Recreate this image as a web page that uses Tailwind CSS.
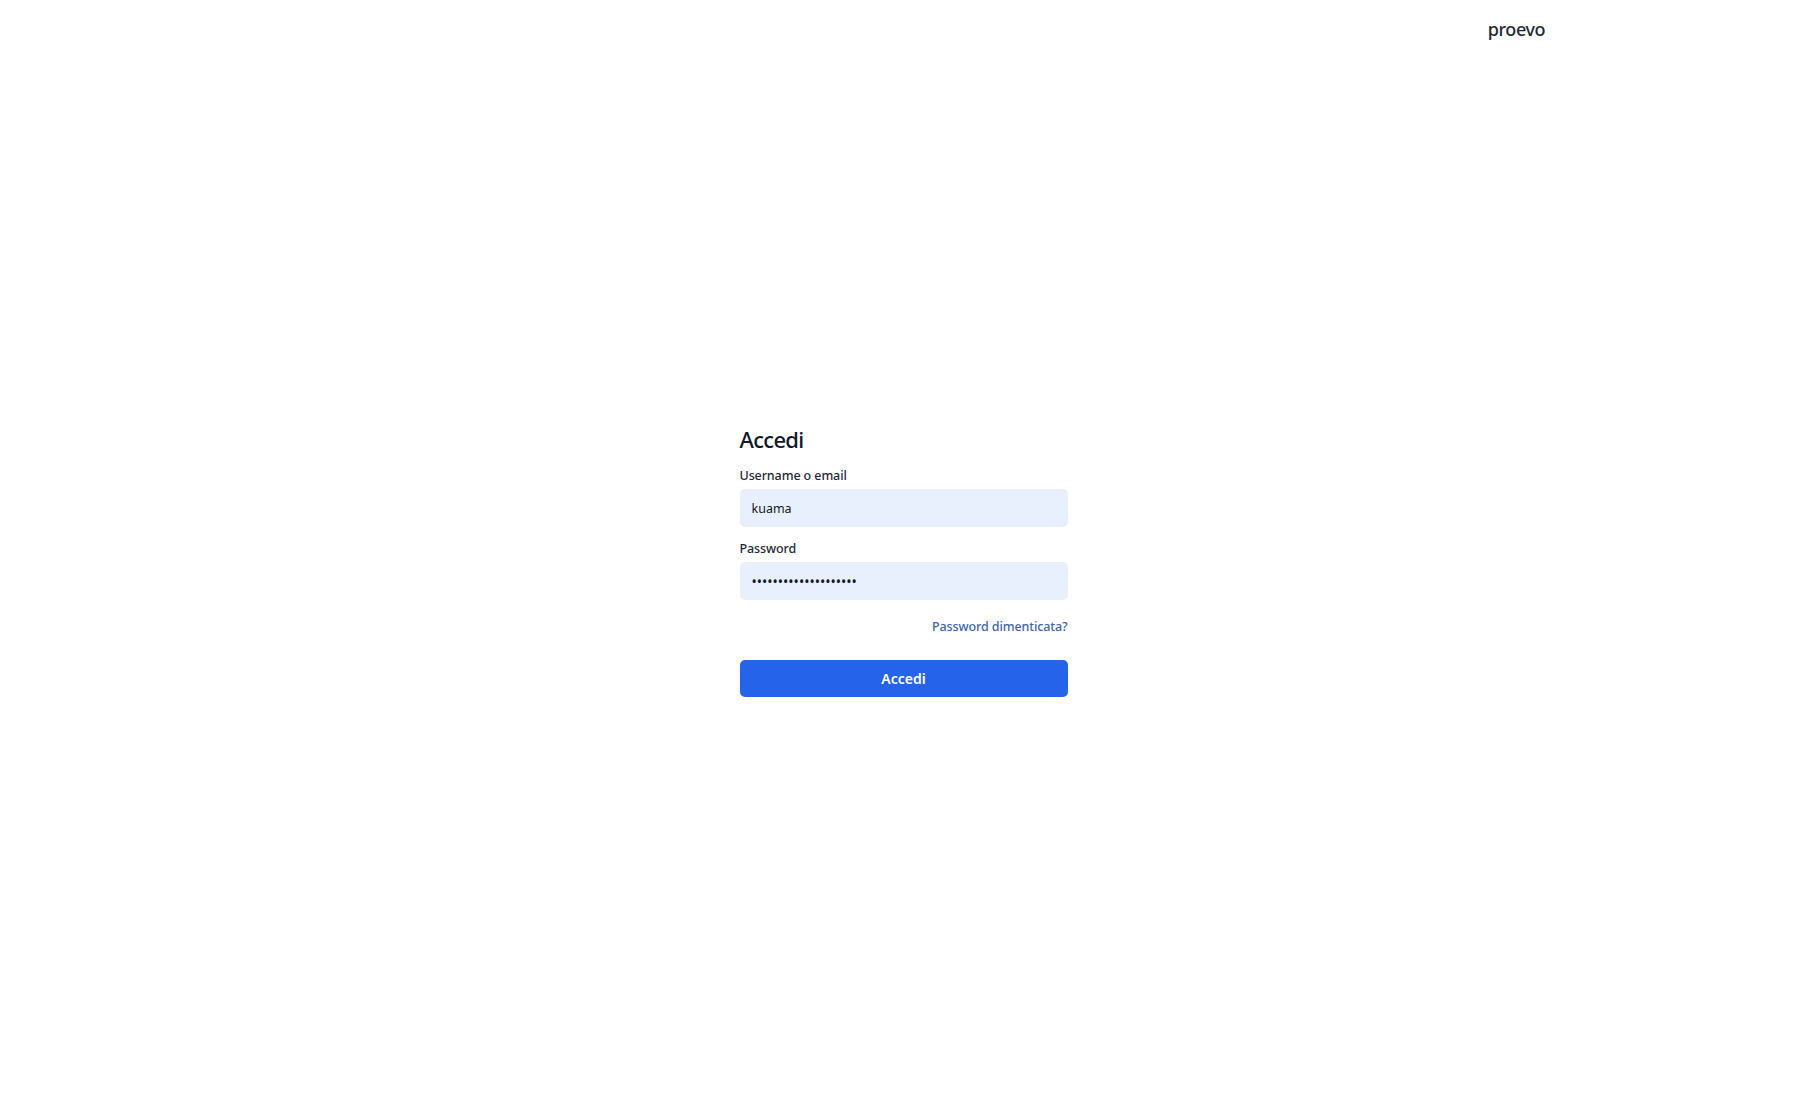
<!DOCTYPE html>
<html lang="it">
<head>
    <meta charset="UTF-8">
    <meta name="viewport" content="width=device-width, initial-scale=1.0">
    <title>Accedi - proevo</title>
    <script src="https://cdn.jsdelivr.net/npm/@tailwindcss/browser@4"></script>
</head>
<body class="bg-white font-['Noto_Sans','Open_Sans',sans-serif] text-[#111827]">
    <div class="min-h-screen flex flex-col">
        <header class="h-[60px] shrink-0 max-w-[1283px] w-full mx-auto flex justify-end pt-[15px]">
            <span class="text-[18px] leading-[28px] font-medium tracking-[-0.45px] text-[#1f2937]">proevo</span>
        </header>
        <main class="flex-1 flex items-center justify-center pb-[58px]">
            <form class="w-[328px]">
                <h1 class="text-[22px] leading-[28px] font-medium tracking-[-0.7px] mb-[13px]">Accedi</h1>
                <div class="mb-[12px]">
                    <label class="block text-[12.5px] leading-[20px] font-medium tracking-[-0.1px] mb-[3px] text-[#1f2937]">Username o email</label>
                    <input type="text" value="kuama" class="block w-full h-[38px] px-[12px] rounded-[5px] bg-[#e8f0fe] text-[12.5px] text-[#111827] outline-none">
                </div>
                <div class="mb-[17px]">
                    <label class="block text-[12.5px] leading-[20px] font-medium tracking-[-0.1px] mb-[3px] text-[#1f2937]">Password</label>
                    <input type="password" value="aaaaaaaaaaaaaaaaaaaa" class="block w-full h-[38px] px-[12px] rounded-[5px] bg-[#e8f0fe] text-[14px] text-[#111827] outline-none">
                </div>
                <div class="flex justify-end mb-[23px]">
                    <a href="#" class="text-[12.5px] leading-[20px] font-medium tracking-[-0.1px] text-[#3f66a6]">Password dimenticata?</a>
                </div>
                <button type="button" class="block w-full h-[37px] rounded-[5px] bg-[#2563eb] text-white text-[14px] font-semibold">Accedi</button>
            </form>
        </main>
    </div>
</body>
</html>
